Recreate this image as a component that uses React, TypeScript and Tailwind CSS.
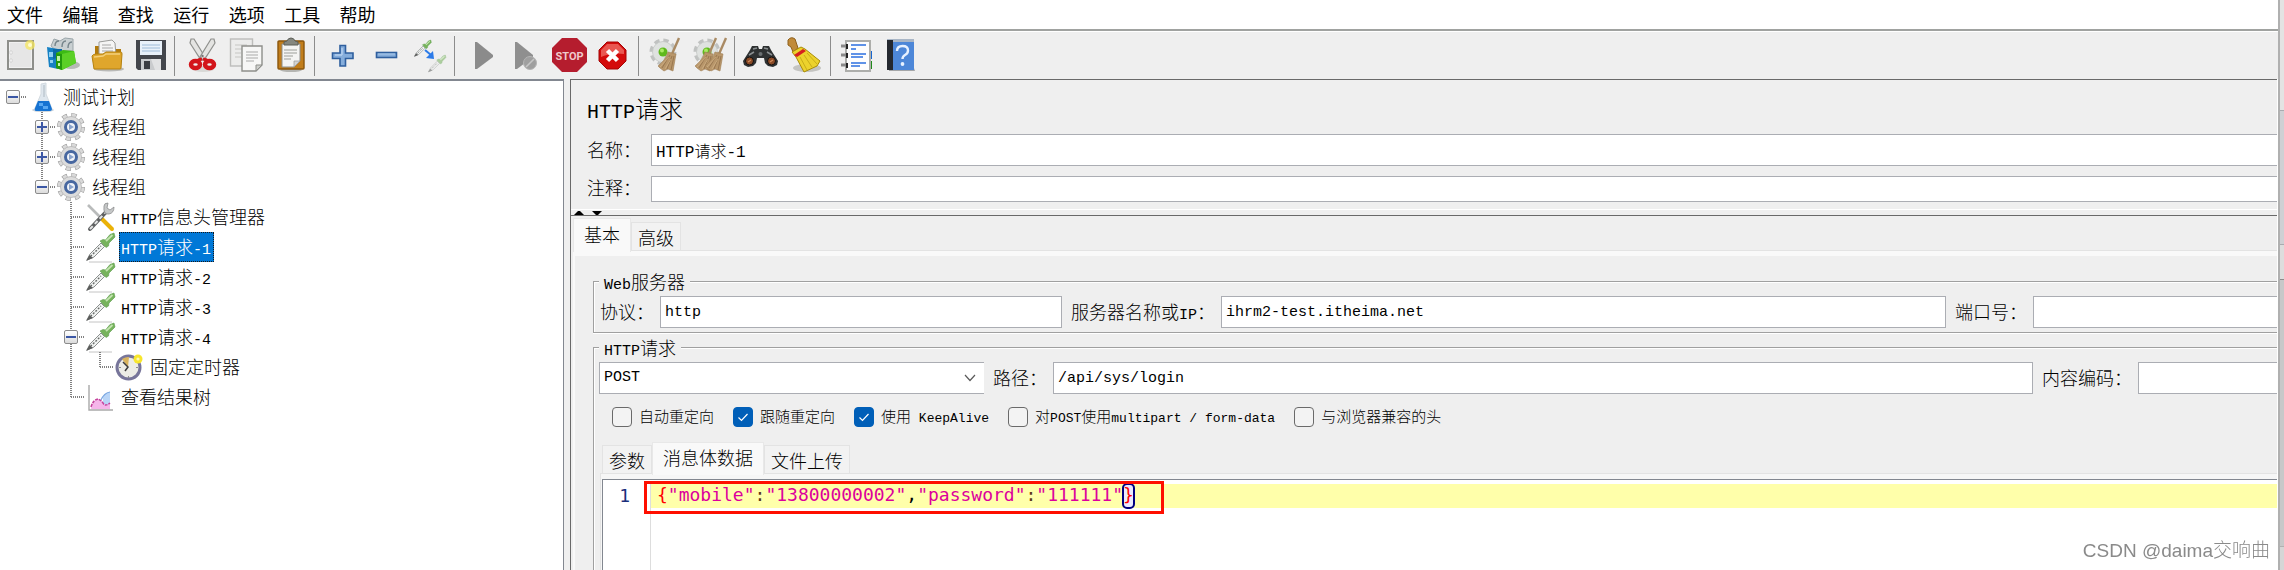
import type { ReactNode } from 'react'
import { clsx } from 'clsx'

const menus = ['文件', '编辑', '查找', '运行', '选项', '工具', '帮助']

/* ---------- shared drawing parts ---------- */

function Pipette({ faded = false }: { faded?: boolean }) {
  return (
    <g opacity={faded ? 0.55 : 1}>
      <path d="M1 27 L4 21 L15 10 L18.500 13.500 L8 24 Z" fill="#f1f3f2" stroke="#8b8f8d" />
      <path d="M4.500 23.500 L15 13" stroke="#6a6d6b" strokeWidth="1.4" strokeDasharray="2 1.5" />
      <path d="M0 28 L3.500 22 L7 25 Z" fill="#5b5d5c" />
      <path d="M14 8 L17 6.500 L19.500 7 L24 1.500 L28 0 L29 4 L23 10 L22.500 13 L20 14.500 Z" fill="#76b35c" stroke="#5a9a4c" strokeWidth="0.6" />
      <path d="M20 8 L26.500 2" stroke="#c3e4b0" strokeWidth="1.8" />
    </g>
  )
}

function Gear() {
  return (
    <g>
      <circle cx="14" cy="14" r="11.5" fill="none" stroke="#9a9a9a" strokeWidth="5" strokeDasharray="5 4.03" />
      <circle cx="14" cy="14" r="11.5" fill="none" stroke="#d9d9d9" strokeWidth="4" strokeDasharray="4 5.03" strokeDashoffset="-0.5" />
      <circle cx="14" cy="14" r="10.5" fill="#dcdcdc" stroke="#b4b4b4" strokeWidth="0.8" />
    </g>
  )
}

function SmallGear() {
  return (
    <g>
      <circle cx="14" cy="15" r="11" fill="none" stroke="#c0c2c1" strokeWidth="5" strokeDasharray="5 3.64" />
      <circle cx="14" cy="15" r="10.5" fill="#dfe2e0" stroke="#c4c7c5" strokeWidth="0.8" />
      <circle cx="14" cy="15" r="4.5" fill="#5fb91c" />
      <circle cx="13" cy="13.5" r="2" fill="#a9ea63" />
    </g>
  )
}

function Broom({ x }: { x: number }) {
  return (
    <g transform={`translate(${x} 0)`}>
      <path d="M19 1 L12 17" stroke="#a98a63" strokeWidth="2.4" />
      <path d="M8 15 L16 17 L13 34 L8 32 L4 34 L0 31 L-2 29 Q5 24 8 15 Z" fill="#b8966a" stroke="#a07f56" strokeWidth="0.6" />
      <path d="M10 18 L2 31 M12 19 L7 32 M14 19 L11 33" stroke="#8f6f4a" strokeWidth="0.8" />
      <path d="M9 20 L0 30 M11 22 L5 32" stroke="#d2b48a" strokeWidth="0.7" />
    </g>
  )
}

/* ---------- toolbar icons, all on a 36px grid ---------- */

const icons: Record<string, ReactNode> = {
  new: (
    <>
      <rect x="7" y="4" width="25" height="28" fill="#f1f1f1" stroke="#8e8f8b" strokeWidth="2" />
      <rect x="9" y="6" width="21" height="24" fill="#e6e6e6" />
      <path d="M9 14h2v3H9zM9 22h2v3H9z" fill="#fff" stroke="#bbb" strokeWidth="0.5" />
      <circle cx="29" cy="8" r="5" fill="#f6e75e" opacity="0.75" />
      <circle cx="29" cy="8" r="2" fill="#fffcd0" />
    </>
  ),
  templates: (
    <>
      <ellipse cx="26" cy="28" rx="9" ry="4" fill="#a9aba8" opacity="0.8" />
      <path d="M6 9 L9 2 L15 4 L20 1 L28 2 L28 14 L12 14 Z" fill="#c9d0d2" stroke="#9aa5a9" />
      <path d="M10 9 Q10 4 14 4 M17 10 Q17 4 21 4 M23 11 Q23 5 27 5" fill="none" stroke="#75848a" strokeWidth="1.4" />
      <path d="M2 10 L13 12 L13 32 L4 30 Z" fill="#1681c4" />
      <path d="M8 12 L17 12 L17 20 L8 22 Z" fill="#0d6aa6" />
      <path d="M4 15h4v5H4zM5 23h3v3H5z" fill="#8fd0f2" />
      <path d="M11 16 L18 13 L29 14 L31 26 L17 33 L11 31 Z" fill="#3cbb15" />
      <path d="M17 17 L29 14 L31 26 L17 33 Z" fill="#5bd026" />
      <path d="M11 16 L17 17 L17 33 L11 31 Z" fill="#239a0c" />
      <path d="M12 19h3v5h-3zM13 26h2v3h-2z" fill="#c2f2a6" />
    </>
  ),
  open: (
    <>
      <ellipse cx="20" cy="32" rx="15" ry="2.5" fill="#b9b9b7" />
      <path d="M6 9h10l2 3h14v18H6z" fill="#b17a0c" />
      <path d="M10 5 L23 3 L26 6 L27 19 L10 19 Z" fill="#f5f5f4" stroke="#9b9c99" />
      <path d="M13 8h9M13 11h11M13 14h11" stroke="#a8a8a6" strokeWidth="1.2" />
      <path d="M3 19 Q4 17 7 17 L14 17 L17 15 L32 15 Q33 15 33 17 L32 31 Q32 32 31 32 L5 32 Z" fill="#dfa62c" stroke="#b5810f" />
      <path d="M5 20 L14 19 L17 17 L31 17" fill="none" stroke="#f4d07a" strokeWidth="1.3" />
    </>
  ),
  save: (
    <>
      <path d="M3 3h30v30H5l-2-2z" fill="#43464c" />
      <rect x="7" y="4" width="22" height="14" fill="#e8f1fa" />
      <path d="M9 8h18M9 11h18M9 14h18" stroke="#9dbbd8" strokeWidth="1.2" />
      <rect x="8" y="22" width="20" height="11" fill="#c9cbcd" />
      <rect x="11" y="24" width="6" height="8" fill="#3a3d42" />
      <path d="M18 22h10v11h-6z" fill="#e1e2e3" />
    </>
  ),
  cut: (
    <>
      <ellipse cx="18" cy="32" rx="11" ry="3" fill="#d8d8d6" />
      <path d="M6 2 L9 2 L20 20 L17 23 L14 20 L5 6 Z" fill="#e4e4e2" stroke="#8f908d" strokeWidth="1.2" />
      <path d="M29 2 L26 2 L15 20 L18 23 L21 20 L30 6 Z" fill="#e4e4e2" stroke="#8f908d" strokeWidth="1.2" />
      <circle cx="17.5" cy="19" r="1.2" fill="#777" />
      <ellipse cx="10.500" cy="27.500" rx="4.500" ry="3.500" fill="none" stroke="#d3151b" strokeWidth="4.500" />
      <ellipse cx="24.500" cy="27.500" rx="4.500" ry="3.500" fill="none" stroke="#d3151b" strokeWidth="4.500" />
      <path d="M13 23 L17 22 M22 23 L18 22" stroke="#d3151b" strokeWidth="3" />
    </>
  ),
  copy: (
    <>
      <rect x="1.5" y="2" width="22" height="27" fill="#ececeb" stroke="#bdbdbb" strokeWidth="1.4" />
      <path d="M6 8h12M6 12h12M6 16h6M6 20h6" stroke="#c6c6c4" strokeWidth="1.2" />
      <path d="M13 9h20v19l-6 6H13z" fill="#f7f7f6" stroke="#8e8f8b" strokeWidth="1.4" />
      <path d="M17 15h12M17 18h12M17 21h12M17 24h8" stroke="#a9aaa7" strokeWidth="1.2" />
      <path d="M27 34 L27 28 L33 28 Z" fill="#cfd0cd" stroke="#8e8f8b" />
    </>
  ),
  paste: (
    <>
      <ellipse cx="18" cy="33" rx="11" ry="2" fill="#b5b5b2" />
      <rect x="5" y="4" width="26" height="28" rx="1" fill="#c17d1b" stroke="#8a560c" strokeWidth="1.4" />
      <path d="M9 7h18v17l-6 6H9z" fill="#f4f4f3" stroke="#8e8f8b" />
      <path d="M11 13h13M11 16h13M11 19h9M11 22h7" stroke="#9c9d9a" strokeWidth="1.2" />
      <path d="M21 30 L21 24 L27 24 Z" fill="#d5d5d3" stroke="#999" strokeWidth="0.7" />
      <path d="M11 8 L11 5 L14 4 Q15 1 18 1 Q21 1 22 4 L25 5 L25 8 Z" fill="#85877f" stroke="#5d5f59" />
    </>
  ),
  add: (
    <>
      <path d="M15 8.500h5.500v7.500h7.500v5.500h-7.500v7.500H15v-7.500H7.500V16H15z" fill="#85addb" stroke="#2f5f9e" strokeWidth="1.6" />
      <path d="M17 11v7M10 18h7" stroke="#b5cfee" strokeWidth="1.4" />
    </>
  ),
  remove: (
    <>
      <rect x="7.500" y="15.500" width="20" height="5" fill="#85addb" stroke="#2f5f9e" strokeWidth="1.6" />
      <path d="M9 17h17" stroke="#a9c8ea" />
    </>
  ),
  toggle: (
    <>
      <g transform="translate(1 3) scale(0.6)">
        <Pipette />
      </g>
      <g transform="translate(15 18) scale(0.62)">
        <Pipette faded />
      </g>
      <path d="M12 13 L18 18" stroke="#2c7be8" strokeWidth="2" />
      <path d="M20 14 L21 22 L13 21 Z" fill="#2c7be8" />
    </>
  ),
  start: <path d="M10 5 L12 5 L28 18 L28 20 L12 32 L10 32 Z" fill="#8b8b8b" />,
  startNoPause: (
    <>
      <path d="M6 5 L8 5 L24 18 L24 20 L8 32 L6 32 Z" fill="#8f8f8f" />
      <circle cx="21" cy="26" r="6.500" fill="#9f9f9f" stroke="#b5b5b5" />
      <path d="M17 30 L25 22" stroke="#c6c6c6" strokeWidth="1.6" />
    </>
  ),
  stop: (
    <>
      <path d="M9 1 H24 L34 11 V25 L24 35 H9 L-1 25 V11 Z" fill="#b51d2e" />
      <text x="16.500" y="23" textAnchor="middle" fontSize="11" fontWeight="700" fill="#efc9cc" fontFamily="Roboto, Liberation Sans, sans-serif">
        STOP
      </text>
    </>
  ),
  shutdown: (
    <>
      <path d="M10 5 H21 L29 13 V24 L21 32 H10 L2 24 V13 Z" fill="#d40b0b" stroke="#a30606" />
      <path d="M10 7 H21 L27 13 V17 Q15 15 4 20 V13 Z" fill="#ee6a63" opacity="0.8" />
      <path d="M10.500 13.500 L20.500 23.500 M20.500 13.500 L10.500 23.500" stroke="#fff" strokeWidth="4.500" />
    </>
  ),
  clear: (
    <>
      <SmallGear />
      <Broom x={11} />
    </>
  ),
  clearAll: (
    <>
      <SmallGear />
      <Broom x={4} />
      <Broom x={14} />
    </>
  ),
  search: (
    <>
      <path d="M7 9 L13 9 L14 12 L17 12 L18 9 L24 9 L26 13 L33 24 L32 28 L28 30 L23 29 L20 26 L19 21 L12 21 L11 26 L8 29 L3 30 L-1 28 L-2 24 L5 13 Z" fill="#2e3132" />
      <path d="M8 12 L12 11 M19 11 L23 12 M4 18 L9 15 M22 15 L27 18" stroke="#8a8f91" strokeWidth="1.5" />
      <circle cx="4.500" cy="24" r="4" fill="#8a4a26" stroke="#111" />
      <circle cx="26.500" cy="24" r="4" fill="#8a4a26" stroke="#111" />
      <path d="M3 25 L6 23 M25 25 L28 23" stroke="#d08a5c" strokeWidth="1.3" />
      <circle cx="15.500" cy="17" r="2" fill="#6a6f71" />
    </>
  ),
  searchReset: (
    <>
      <ellipse cx="18" cy="31" rx="14" ry="4" fill="#c4c4c1" />
      <path d="M-1 3 Q2 -1 6 2 L9 11 L4 15 L2 10 L-1 8 Z" fill="#c08a3a" stroke="#8d5f1b" />
      <path d="M3 15 L12 10 L16 12 L31 24 L28 29 L15 35 L7 20 Z" fill="#ecd22c" stroke="#a98c08" />
      <path d="M11 20 L18 33 M15 18 L23 30 M18 16 L28 27" stroke="#c9ad18" />
      <path d="M5 18 L14 12 L17 14 L8 20 Z" fill="#d6201f" />
    </>
  ),
  functions: (
    <>
      <path d="M28 14h3v8h-3z" fill="#1766cf" />
      <path d="M28 24h3v8h-3z" fill="#1f8a1b" />
      <rect x="5" y="4" width="24" height="30" fill="#fdfdfd" stroke="#adaeab" strokeWidth="2" />
      <path d="M10 8h15M10 12h5M10 17h15M10 20h12M10 26h15M10 29h9" stroke="#2b6fe0" strokeWidth="1.3" />
      <path d="M0 9h7M0 18h7M0 28h7" stroke="#8a8a8a" strokeWidth="3" />
      <path d="M5 7h2v5H5zM5 16h2v5H5zM5 26h2v5H5z" fill="#222" />
    </>
  ),
  help: (
    <>
      <path d="M4 34 L30 34 L29 31 L4 31 Z" fill="#a4a6a8" />
      <rect x="2" y="2" width="27" height="31" fill="#4d87d8" />
      <path d="M2 2h27v3H5L2 4z" fill="#a9b6c6" />
      <rect x="2" y="3" width="6" height="30" fill="#24282f" />
      <path d="M12 14 Q12 9 17.500 9 Q23 9 23 13.500 Q23 16.500 20 18 Q17.500 19.500 17.500 22" fill="none" stroke="#e7f1ff" strokeWidth="2.4" />
      <circle cx="17.500" cy="27" r="1.9" fill="#e7f1ff" />
    </>
  ),
}

const toolGroups = [
  [['new', '新建'], ['templates', '模板'], ['open', '打开'], ['save', '保存']],
  [['cut', '剪切'], ['copy', '复制'], ['paste', '粘贴']],
  [['add', '展开'], ['remove', '折叠'], ['toggle', '切换']],
  [['start', '启动'], ['startNoPause', '不停顿开始'], ['stop', '停止'], ['shutdown', '关闭']],
  [['clear', '清除'], ['clearAll', '清除全部']],
  [['search', '搜索'], ['searchReset', '重置搜索']],
  [['functions', '函数助手'], ['help', '帮助']],
]

/* ---------- tree ---------- */

const treeIcons: Record<string, ReactNode> = {
  plan: (
    <>
      <ellipse cx="15" cy="27" rx="11" ry="2" fill="#c8d2db" />
      <path d="M13 1 L18 0 L18 11 L24 26 Q24 28 22 28 L8 28 Q6 28 7 25 L13 11 Z" fill="#dfe7ee" stroke="#d3dae0" />
      <path d="M10 18 L21 18 L24 26 Q24 28 22 28 L8 28 Q6 28 7 25 Z" fill="#1673d2" />
      <path d="M11 20h4v3h-4zM15 23h5v3h-5z" fill="#59a8f2" />
      <path d="M16 2v12" stroke="#aeb9c2" />
    </>
  ),
  group: (
    <>
      <Gear />
      <circle cx="14" cy="14" r="5.500" fill="#f0f3f8" stroke="#4767a0" strokeWidth="3" />
      <path d="M12 11 L17 14 L12 17 Z" fill="#8aa3cc" />
    </>
  ),
  header: (
    <>
      <path d="M2 2 L16 16" stroke="#b9bbbb" strokeWidth="2.600" />
      <path d="M16 16 L26 26" stroke="#eab208" strokeWidth="4" strokeLinecap="round" />
      <path d="M4 26 L20 9" stroke="#5f6162" strokeWidth="4" strokeLinecap="round" />
      <path d="M4 26 L19 10" stroke="#e4e5e5" strokeWidth="2" strokeDasharray="4 3" />
      <path d="M18 3 Q18 0 22 0 L21 5 L24 7 L28 4 Q28 10 23 11 Q17 12 18 3 Z" fill="#c6c8c8" stroke="#8b8d8e" strokeWidth="0.800" />
    </>
  ),
  http: (
    <>
      <path d="M3 29h23" stroke="#c4c4c4" />
      <Pipette />
    </>
  ),
  timer: (
    <>
      <circle cx="13.500" cy="14.500" r="11.500" fill="#ecece6" stroke="#77759a" strokeWidth="3" />
      <path d="M13 14 L7 6 Q10 4 14 4 Z" fill="#d9b35c" />
      <path d="M8 9 L13 14 L10 18" fill="none" stroke="#3c3c3c" strokeWidth="1.500" />
      <path d="M13.500 23v2M4 14.500h2M21 14.500h2" stroke="#8c8c8c" />
      <circle cx="23" cy="6" r="4.500" fill="#f7e62c" />
      <circle cx="23" cy="6" r="1.600" fill="#fff9b0" />
    </>
  ),
  results: (
    <>
      <path d="M3 2v25h24" fill="none" stroke="#a9a9a9" strokeWidth="1.400" />
      <path d="M17 14 Q19 9 24 9 V25 H17 Z" fill="#b9d5f7" />
      <path d="M5 26 Q6 18 12 16 Q15 16 17 20 Q20 24 24 20 V26 Z" fill="#f5b6ea" />
      <path d="M5 24 Q7 17 12 16 Q15 17 17 20 Q19 24 24 20" fill="none" stroke="#c4429b" strokeWidth="1.500" strokeDasharray="3 1" />
      <path d="M15 17 Q18 10 24 9" fill="none" stroke="#7ba7e0" strokeWidth="1.200" />
    </>
  ),
}

type Guide = 'blank' | 'line' | 'tee' | 'elbow' | 'root'

type Node = {
  icon: string
  guides: Guide[]
  latin?: string
  text: string
  tail?: string
  box?: 'plus' | 'minus'
  selected?: boolean
}

const nodes: Node[] = [
  { icon: 'plan', guides: ['root'], text: '测试计划', box: 'minus' },
  { icon: 'group', guides: ['blank', 'tee'], text: '线程组', box: 'plus' },
  { icon: 'group', guides: ['blank', 'tee'], text: '线程组', box: 'plus' },
  { icon: 'group', guides: ['blank', 'elbow'], text: '线程组', box: 'minus' },
  { icon: 'header', guides: ['blank', 'blank', 'tee'], latin: 'HTTP', text: '信息头管理器' },
  { icon: 'http', guides: ['blank', 'blank', 'tee'], latin: 'HTTP', text: '请求', tail: '-1', selected: true },
  { icon: 'http', guides: ['blank', 'blank', 'tee'], latin: 'HTTP', text: '请求', tail: '-2' },
  { icon: 'http', guides: ['blank', 'blank', 'tee'], latin: 'HTTP', text: '请求', tail: '-3' },
  { icon: 'http', guides: ['blank', 'blank', 'tee'], latin: 'HTTP', text: '请求', tail: '-4', box: 'minus' },
  { icon: 'timer', guides: ['blank', 'blank', 'line', 'elbow'], text: '固定定时器' },
  { icon: 'results', guides: ['blank', 'blank', 'elbow'], text: '查看结果树' },
]

function Latin({ children }: { children: ReactNode }) {
  return <span className="font-['Liberation_Mono',monospace] text-[15px] leading-none">{children}</span>
}

function GuideCell({ kind, box }: { kind: Guide; box?: 'plus' | 'minus' }) {
  return (
    <span className="grid h-[30px] w-[29px] shrink-0 *:col-start-1 *:row-start-1">
      {(kind === 'line' || kind === 'tee' || kind === 'elbow') && (
        <span
          className={clsx(
            'w-0.5 justify-self-center bg-[repeating-linear-gradient(to_bottom,#808080_0_1px,transparent_1px_2px)]',
            kind === 'elbow' ? 'h-4' : 'h-[30px]',
          )}
        />
      )}
      {(kind === 'tee' || kind === 'elbow' || kind === 'root') && (
        <span className="h-0.5 w-[14px] self-center justify-self-end bg-[repeating-linear-gradient(to_right,#808080_0_1px,transparent_1px_2px)]" />
      )}
      {box && (
        <span className="relative grid size-[14px] place-items-center self-center justify-self-center rounded-xs border border-[#8c8c8c] bg-linear-to-b from-white to-[#dcdcdc] *:col-start-1 *:row-start-1">
          <span className="h-0.5 w-[10px] bg-[#3b57a5]" />
          {box === 'plus' && <span className="h-[10px] w-0.5 bg-[#3b57a5]" />}
        </span>
      )}
    </span>
  )
}

function Tree() {
  return (
    <ul role="tree" className="-ml-0.5 pt-px">
      {nodes.map((node, i) => (
        <li key={i} role="treeitem" aria-selected={!!node.selected} className="flex h-[30px] items-center">
          {node.guides.map((kind, g) => (
            <GuideCell key={g} kind={kind} box={g === node.guides.length - 1 ? node.box : undefined} />
          ))}
          <svg className="size-[30px] shrink-0 overflow-visible" viewBox="-1 -1 30 30">
            {treeIcons[node.icon]}
          </svg>
          <span
            className={clsx(
              'ml-1 h-[30px] pr-[3px] pl-0.5 leading-7 whitespace-nowrap',
              node.selected && 'bg-[#0078d7] text-white outline-1 -outline-offset-1 outline-dotted outline-[#1a1a1a]',
            )}
          >
            {node.latin && <Latin>{node.latin}</Latin>}
            {node.text}
            {node.tail && <Latin>{node.tail}</Latin>}
          </span>
        </li>
      ))}
    </ul>
  )
}

/* ---------- form parts ---------- */

const inputClass =
  "min-w-0 border border-[#abadb3] bg-white px-1 font-['Liberation_Mono','Noto_Sans_CJK_SC',monospace] text-black outline-none"

function Tab({ children, active = false }: { children: ReactNode; active?: boolean }) {
  return (
    <button
      type="button"
      role="tab"
      aria-selected={active}
      className={clsx(
        'border border-b-0 leading-6 whitespace-nowrap',
        active
          ? 'relative -mb-0.5 self-stretch border-[#e8e8e8] bg-[#f9f9f9] px-[10px] pb-1'
          : 'h-7 border-[#e3e3e3] bg-[#f2f2f2] px-[6px]',
      )}
    >
      {children}
    </button>
  )
}

function Check({ id, checked = false, children }: { id: string; checked?: boolean; children: ReactNode }) {
  return (
    <div className="flex h-5 items-center gap-[7px]">
      <span className="grid size-5 *:col-start-1 *:row-start-1">
        <input
          id={id}
          type="checkbox"
          defaultChecked={checked}
          className="size-5 appearance-none rounded border border-[#6a6a6a] bg-[#f3f3f3] checked:border-[#005fb8] checked:bg-[#005fb8]"
        />
        {checked && (
          <svg className="pointer-events-none size-5" viewBox="0 0 20 20" fill="none" stroke="#fff" strokeWidth="1.2">
            <path d="M5.500 10.500 L8.500 13.500 L14.500 7" />
          </svg>
        )}
      </span>
      <label htmlFor={id} className="pb-0.5 text-[15px] leading-5 whitespace-nowrap">
        {children}
      </label>
    </div>
  )
}

function SmallLatin({ children }: { children: ReactNode }) {
  return <span className="font-['Liberation_Mono',monospace] text-[13px] leading-none whitespace-pre">{children}</span>
}

function BodyEditor() {
  return (
    <div className="relative flex min-h-0 flex-1 border-t border-l border-[#828790] bg-white pt-1 font-['DejaVu_Sans_Mono',monospace] text-[18px] leading-6">
      <div className="w-12 shrink-0 border-r border-[#dddddd] pr-5 text-right text-[#1b2f7c]">1</div>
      <div className="flex-1">
        <div role="textbox" aria-label="消息体数据" className="h-6 bg-[#ffffaa] pl-[6px] leading-[22px] whitespace-pre">
          <span className="text-[#ff0000]">{'{'}</span>
          <span className="text-[#dc009c]">"mobile"</span>
          <span className="text-[#5b3a1a]">:</span>
          <span className="text-[#dc009c]">"13800000002"</span>
          <span className="text-black">,</span>
          <span className="text-[#dc009c]">"password"</span>
          <span className="text-[#5b3a1a]">:</span>
          <span className="text-[#dc009c]">"111111"</span>
          <span className="inline-block h-6 rounded bg-[#eaeaff] text-[#ff0000] outline-2 -outline-offset-1 outline-[#000080]">{'}'}</span>
        </div>
      </div>
      <div className="pointer-events-none absolute top-px left-[41px] h-[33px] w-[520px] border-3 border-[#ff0f00]" />
    </div>
  )
}

function RequestPanel() {
  const label = 'mr-[6px] ml-[9px] h-8 leading-[30px] whitespace-nowrap'
  const fieldset =
    'min-w-0 border border-r-0 border-[#a0a0a0] pl-[5px] shadow-[0_1px_0_#fff,inset_1px_1px_0_#fff]'
  const legend = 'h-[22px] bg-[#efefef] px-[5px] leading-[22px]'

  return (
    <section className="flex min-w-0 flex-1 flex-col border-t border-l border-[#696969]">
      <div className="pt-[14px] pb-[7px] pl-4">
        <h1 className="h-[30px] text-2xl leading-7">
          <span className="font-['Liberation_Mono',monospace] text-[20px] leading-none">HTTP</span>请求
        </h1>
        <div className="mt-[10px] flex h-8 items-center">
          <label htmlFor="name" className="mr-[10px] pb-0.5">名称：</label>
          <input id="name" defaultValue="HTTP请求-1" className={clsx(inputClass, 'h-8 flex-1 border-r-0 text-base')} />
        </div>
        <div className="mt-[10px] flex h-[26px] items-center">
          <label htmlFor="comment" className="mr-[10px] pb-1">注释：</label>
          <input id="comment" className={clsx(inputClass, 'h-[26px] flex-1 border-r-0 text-base')} />
        </div>
      </div>

      <div className="flex h-[7px] shrink-0 items-end gap-2 border-t border-b border-t-white border-b-[#696969] pl-[3px]">
        <svg className="h-1 w-[10px]" viewBox="0 0 10 4"><path d="M0 4 L4 0 H6 L10 4 Z" /></svg>
        <svg className="h-1 w-[10px]" viewBox="0 0 10 4"><path d="M0 0 L4 4 H6 L10 0 Z" /></svg>
      </div>

      <div role="tablist" className="flex h-[34px] shrink-0 items-end pt-0.5 pl-0.5">
        <Tab active>基本</Tab>
        <Tab>高级</Tab>
      </div>
      <div className="ml-0.5 flex min-h-0 flex-1 flex-col border-t border-[#e3e3e3]">
        <div className="flex min-h-0 flex-1 flex-col border-t-5 border-l-2 border-[#f9f9f9] pt-[14px] pl-[18px]">
          <fieldset className={clsx(fieldset, 'pt-1 pb-1')}>
            <legend className={legend}>
              <Latin>Web</Latin>服务器
            </legend>
            <div className="flex h-8 items-center">
              <label htmlFor="protocol" className="mr-[6px] ml-px h-8 leading-[30px] whitespace-nowrap">协议：</label>
              <input id="protocol" defaultValue="http" className={clsx(inputClass, 'h-8 flex-[392] text-[15px]')} />
              <label htmlFor="server" className={label}>
                服务器名称或<Latin>IP</Latin>：
              </label>
              <input id="server" defaultValue="ihrm2-test.itheima.net" className={clsx(inputClass, 'h-8 flex-[715] text-[15px]')} />
              <label htmlFor="port" className={label}>端口号：</label>
              <input id="port" className={clsx(inputClass, 'h-8 flex-[235] border-r-0 text-[15px]')} />
            </div>
          </fieldset>

          <fieldset className={clsx(fieldset, 'mt-[3px] flex min-h-0 flex-1 flex-col border-b-0 pt-1')}>
            <legend className={legend}>
              <Latin>HTTP</Latin>请求
            </legend>
            <div className="flex h-8 shrink-0 items-center">
              <div className="grid min-w-0 flex-[385] *:col-start-1 *:row-start-1">
                <select
                  aria-label="方法"
                  defaultValue="POST"
                  className={clsx(inputClass, 'h-8 w-full appearance-none border-r-0 text-[15px]')}
                >
                  <option>GET</option>
                  <option>POST</option>
                </select>
                <svg
                  className="pointer-events-none mr-2 h-2 w-3 self-center justify-self-end"
                  viewBox="0 0 12 8"
                  fill="none"
                  stroke="#5a5a5a"
                  strokeWidth="1.2"
                >
                  <path d="M1 1 L6 6.500 L11 1" />
                </svg>
              </div>
              <label htmlFor="path" className={label}>路径：</label>
              <input id="path" defaultValue="/api/sys/login" className={clsx(inputClass, 'h-8 flex-[970] text-[15px]')} />
              <label htmlFor="encoding" className={label}>内容编码：</label>
              <input id="encoding" className={clsx(inputClass, 'h-8 flex-[130] border-r-0 text-[15px]')} />
            </div>

            <div className="mt-[13px] flex h-5 shrink-0 gap-[19px] pl-[13px]">
              <Check id="auto-redirect">自动重定向</Check>
              <Check id="follow-redirect" checked>跟随重定向</Check>
              <Check id="keepalive" checked>
                使用<SmallLatin> KeepAlive</SmallLatin>
              </Check>
              <Check id="multipart">
                对<SmallLatin>POST</SmallLatin>使用<SmallLatin>multipart / form-data</SmallLatin>
              </Check>
              <Check id="browser-headers">与浏览器兼容的头</Check>
            </div>

            <div role="tablist" className="mt-[15px] flex h-[31px] shrink-0 items-end pl-[3px]">
              <Tab>参数</Tab>
              <Tab active>消息体数据</Tab>
              <Tab>文件上传</Tab>
            </div>
            <div className="ml-px flex min-h-0 flex-1 flex-col border-t border-l border-[#e3e3e3] bg-[#f6f6f6] pt-[5px] pl-px">
              <BodyEditor />
            </div>
          </fieldset>
        </div>
      </div>
    </section>
  )
}

export default function App() {
  return (
    <div className="flex h-screen overflow-hidden bg-white font-['Noto_Sans_CJK_SC',sans-serif] text-[18px] font-light text-black">
      <div className="flex min-w-0 flex-1 flex-col">
        <nav className="h-[31px] border-b-2 border-[#a0a2a0] pl-[7px]">
          <div className="grid w-[388px] grid-cols-7 font-normal">
            {menus.map((menu) => (
              <button key={menu} type="button" className="text-left leading-7">
                {menu}
              </button>
            ))}
          </div>
        </nav>

        <div role="toolbar" className="mt-px flex h-[47px] bg-[#efefef]">
          <div className="-ml-[3px] flex">
            {toolGroups.map((group, i) => (
              <div key={i} className="flex">
                {i > 0 && <span className="mt-1 mr-[6px] ml-px h-10 w-px bg-[#8c8c8c]" />}
                {group.map(([name, title]) => (
                  <button key={name} type="button" aria-label={title} className="flex w-11 items-start justify-center pt-[5px]">
                    <svg className="size-9 overflow-visible" viewBox="0 0 36 36">
                      {icons[name]}
                    </svg>
                  </button>
                ))}
              </div>
            ))}
          </div>
        </div>

        <main className="mr-px flex min-h-0 flex-1 bg-[#efefef]">
          <aside className="w-[564px] shrink-0 border-t-2 border-r border-[#828790] bg-white">
            <Tree />
          </aside>
          <div className="w-[6px] shrink-0" />
          <RequestPanel />
        </main>
      </div>

      <div className="flex w-[6px] flex-col border-l-2 border-[#b0b0b0]">
        <div className="h-[110px] bg-[#e3e3e3]" />
        <div className="h-[134px] border-t border-[#a9abb0] bg-[#cfd0d4]" />
        <div className="h-[35px] border-t border-[#a9abb0] bg-[#dddddd]" />
        <div className="h-[267px] border-t border-[#8c8c8c] bg-[#c8c8c9]" />
        <div className="flex-1 border-t border-[#b0b0b0] bg-[#d6d6d6]" />
      </div>

      <span className="fixed right-[14px] bottom-1 font-['Liberation_Sans','Noto_Sans_CJK_SC',sans-serif] text-[19px] leading-[30px] text-[#8a8a8a]">
        CSDN @daima交响曲
      </span>
    </div>
  )
}
